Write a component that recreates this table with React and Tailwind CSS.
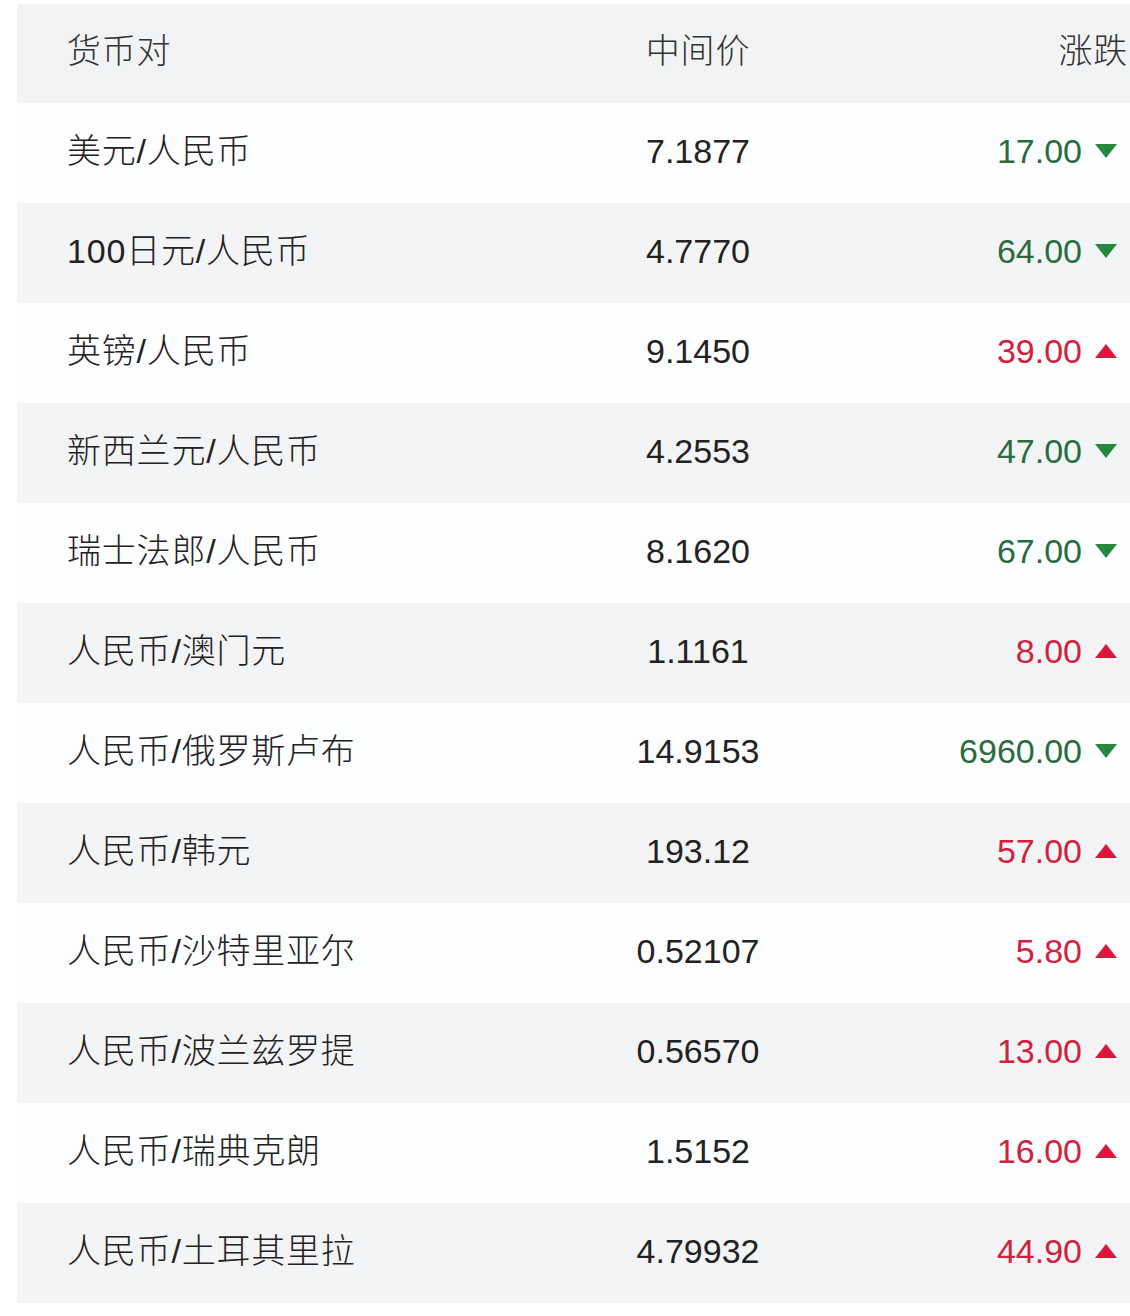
const rows = [
  { pair: "美元/人民币", mid: "7.1877", chg: "17.00", up: false },
  { pair: "100日元/人民币", mid: "4.7770", chg: "64.00", up: false },
  { pair: "英镑/人民币", mid: "9.1450", chg: "39.00", up: true },
  { pair: "新西兰元/人民币", mid: "4.2553", chg: "47.00", up: false },
  { pair: "瑞士法郎/人民币", mid: "8.1620", chg: "67.00", up: false },
  { pair: "人民币/澳门元", mid: "1.1161", chg: "8.00", up: true },
  { pair: "人民币/俄罗斯卢布", mid: "14.9153", chg: "6960.00", up: false },
  { pair: "人民币/韩元", mid: "193.12", chg: "57.00", up: true },
  { pair: "人民币/沙特里亚尔", mid: "0.52107", chg: "5.80", up: true },
  { pair: "人民币/波兰兹罗提", mid: "0.56570", chg: "13.00", up: true },
  { pair: "人民币/瑞典克朗", mid: "1.5152", chg: "16.00", up: true },
  { pair: "人民币/土耳其里拉", mid: "4.79932", chg: "44.90", up: true },
];

function Arrow({ up }) {
  return up ? (
    <svg width="22" height="14" viewBox="0 0 22 14" className="ml-[13px]">
      <polygon points="11,0 22,14 0,14" fill="#d9183b" />
    </svg>
  ) : (
    <svg width="22" height="14" viewBox="0 0 22 14" className="ml-[13px]">
      <polygon points="0,0 22,0 11,14" fill="#25893d" />
    </svg>
  );
}

export default function App() {
  return (
    <main
      className="w-[1130px] h-[1316px] bg-white overflow-hidden pt-[4px] pl-[17px] text-[34px] text-[#222]"
      style={{ fontFamily: '"Liberation Sans", "Noto Sans CJK SC", sans-serif' }}
    >
      {/* Header */}
      <div className="flex items-center h-[99px] bg-[#f2f3f5] text-[#333] font-light pb-[4px]">
        <div className="w-[531px] pl-[50px] tracking-[0.8px]">货币对</div>
        <div className="w-[300px] text-center tracking-[0.8px]">中间价</div>
        <div className="flex-1 text-right pr-[2px] tracking-[0.8px]">涨跌</div>
      </div>

      {rows.map((r, i) => (
        <div
          key={r.pair}
          className={
            "flex items-center h-[100px] pb-[4px] " +
            (i % 2 === 0 ? "bg-[#fcfdff]" : "bg-[#f3f4f6]")
          }
        >
          <div className="w-[531px] pl-[50px] font-light tracking-[0.8px]">{r.pair}</div>
          <div className="w-[300px] text-center">{r.mid}</div>
          <div className="flex-1 flex items-center justify-end pr-[13px]">
            <span className={r.up ? "text-[#d2213d]" : "text-[#2a6b40]"}>{r.chg}</span>
            <Arrow up={r.up} />
          </div>
        </div>
      ))}
    </main>
  );
}
